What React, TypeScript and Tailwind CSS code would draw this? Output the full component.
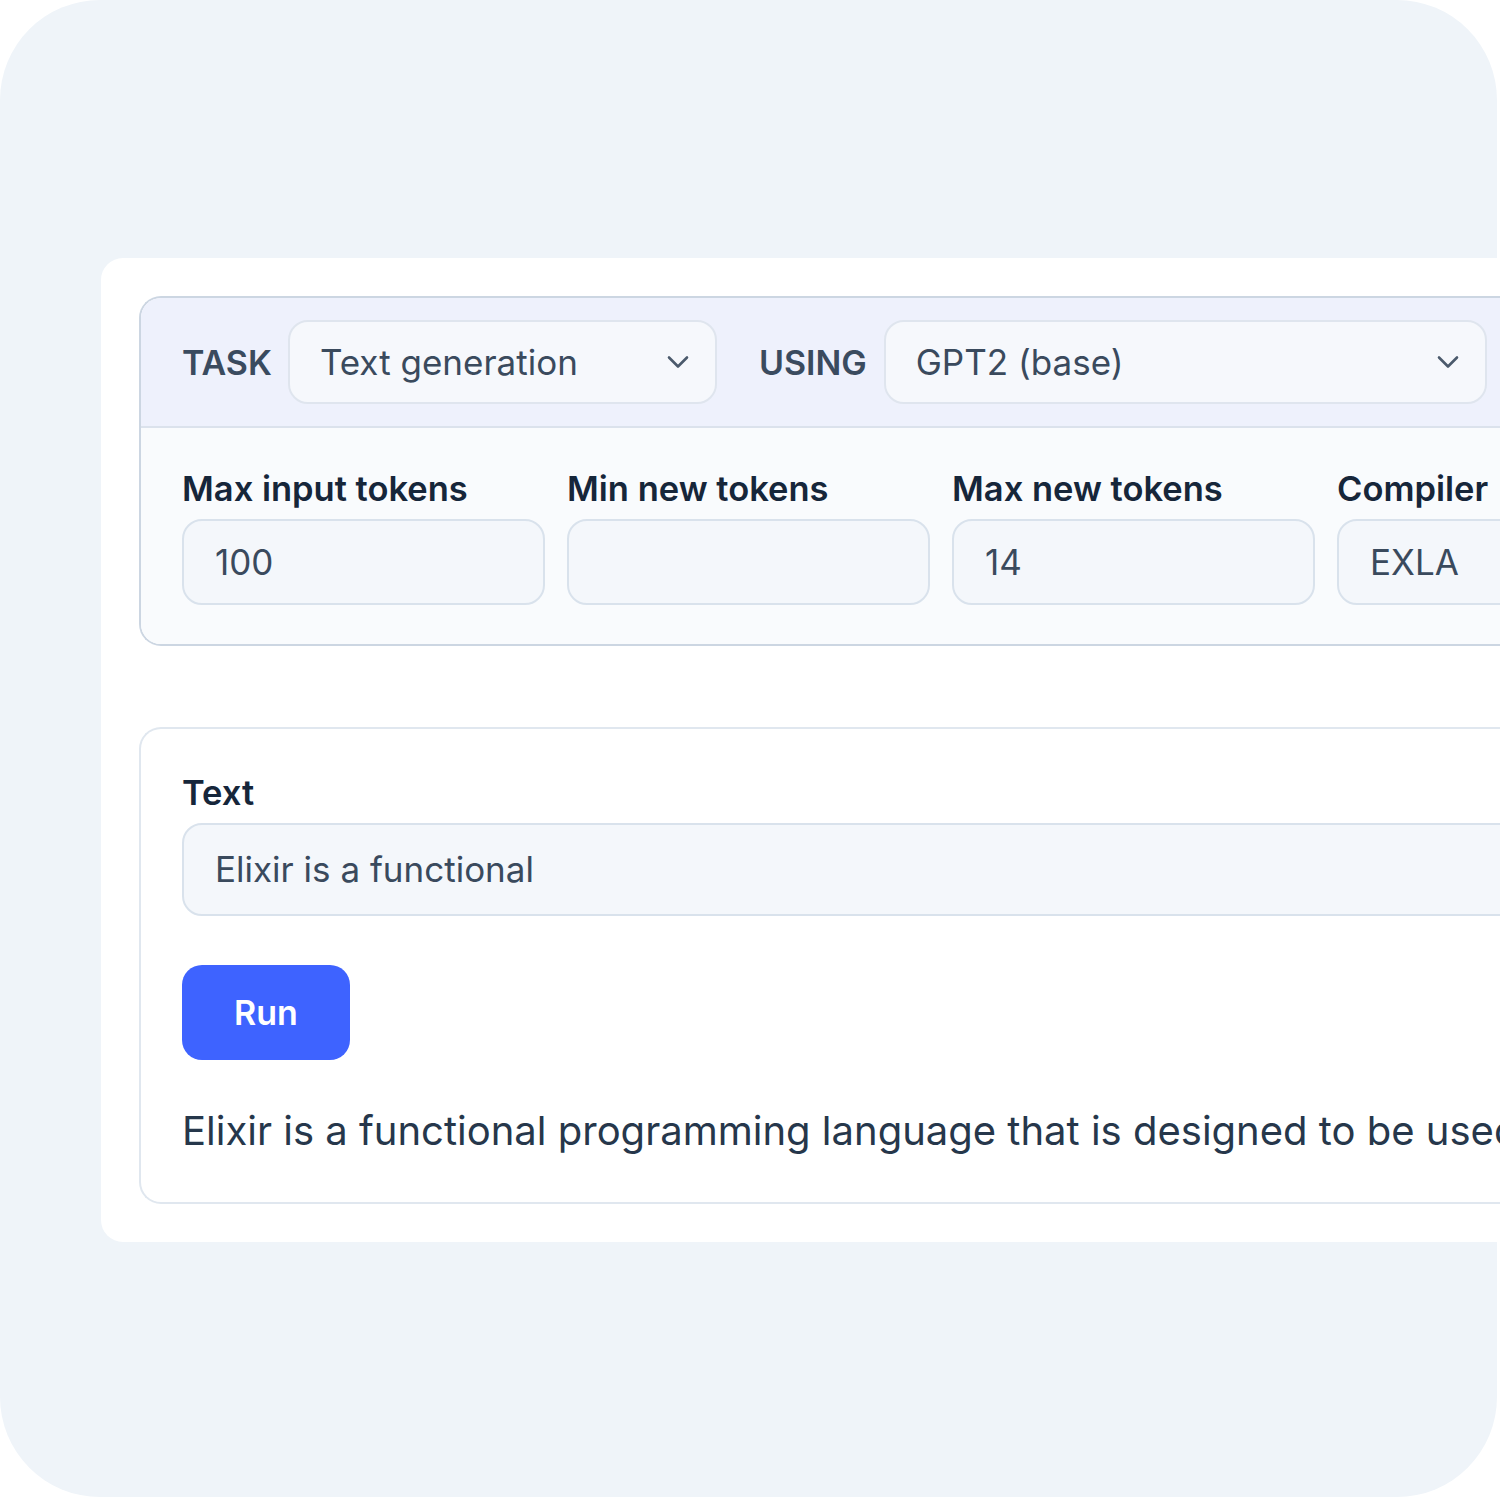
import React from 'react';

function Chevron() {
  return (
    <svg width="22" height="14" viewBox="0 0 22 14" fill="none" className="shrink-0">
      <path d="M2 2.5l9 9 9-9" stroke="#4b5a6c" strokeWidth="2.6" strokeLinecap="round" strokeLinejoin="round" />
    </svg>
  );
}

function Select({ value, width }: { value: string; width: string }) {
  return (
    <div className={`${width} h-[84px] shrink-0 flex items-center justify-between pl-[30px] pr-[26px] rounded-[20px] bg-[#f6f8fc] border-2 border-[#dfe5ee]`}>
      <span className="text-[35px] text-[#3a4a5d]">{value}</span>
      <Chevron />
    </div>
  );
}

function Field({ label, value }: { label: string; value: string }) {
  return (
    <div className="flex flex-col gap-[7px] w-[363px] shrink-0">
      <span className="text-[34.5px] leading-[46px] font-semibold text-[#16263a]">{label}</span>
      <div className="h-[86px] w-full flex items-center px-[31px] rounded-[20px] bg-[#f4f7fb] border-2 border-[#d9e2ec] text-[35px] text-[#3a4a5d]">
        {value}
      </div>
    </div>
  );
}

export default function App() {
  return (
    <div className="w-[1500px] h-[1500px] bg-white overflow-hidden font-['Inter',sans-serif]">
      <div className="w-[1497px] h-[1497px] rounded-[100px] bg-[#eff4f9] pt-[258px] pl-[101px]">
        <div className="w-[1500px] bg-white rounded-l-[22px] pt-[38px] pl-[38px] pb-[38px]">
          <div className="rounded-l-[22px] border-2 border-r-0 border-[#ccd6e2] overflow-hidden">
            <div className="flex items-center bg-[#eef1fc] px-[41px] py-[22px] border-b-2 border-[#dbe2ec]">
              <span className="text-[34px] font-semibold text-[#3a4b5f] mr-[16px]">TASK</span>
              <Select value="Text generation" width="w-[429px]" />
              <span className="text-[34px] font-semibold text-[#3a4b5f] ml-[42px] mr-[17px]">USING</span>
              <Select value="GPT2 (base)" width="w-[603px]" />
            </div>
            <div className="flex gap-[22px] bg-[#f9fbfd] px-[41px] pt-[38px] pb-[39px]">
              <Field label="Max input tokens" value="100" />
              <Field label="Min new tokens" value="" />
              <Field label="Max new tokens" value="14" />
              <Field label="Compiler" value="EXLA" />
            </div>
          </div>

          <div className="mt-[81px] rounded-l-[22px] border-2 border-r-0 border-[#e0e7ef] bg-white px-[41px] pt-[41px] pb-[43px]">
            <div className="flex flex-col gap-[7px]">
              <span className="text-[34.5px] leading-[46px] font-semibold text-[#16263a]">Text</span>
              <div className="h-[93px] w-[1400px] flex items-center px-[31px] rounded-[20px] bg-[#f4f7fb] border-2 border-[#d9e2ec] text-[35px] text-[#3a4a5d]">
                Elixir is a functional
              </div>
            </div>
            <button className="mt-[49px] w-[168px] h-[95px] rounded-[20px] bg-[#3e63ff] text-white text-[34px] font-semibold">
              Run
            </button>
            <p className="mt-[43px] text-[40px] leading-[56px] text-[#26374b] whitespace-nowrap">
              Elixir is a functional programming language that is designed to be used
            </p>
          </div>
        </div>
      </div>
    </div>
  );
}
